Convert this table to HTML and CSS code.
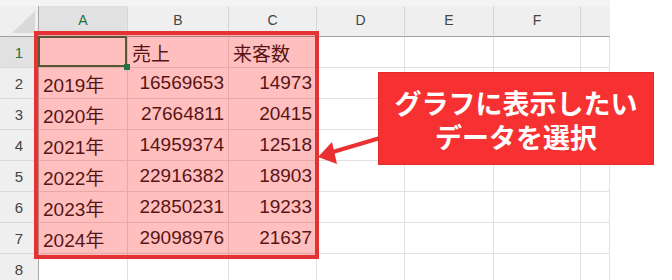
FILE: index.html
```html
<!DOCTYPE html>
<html lang="ja">
<head>
<meta charset="utf-8">
<link rel="stylesheet" href="styles.css">
</head>
<body>
<div class="sheet">
  <div class="topbar"></div>
  <div class="grid">
    <div class="corner"><span class="tri"></span></div>
    <div class="ch sel">A</div>
    <div class="ch">B</div>
    <div class="ch">C</div>
    <div class="ch">D</div>
    <div class="ch">E</div>
    <div class="ch">F</div>
    <div class="ch last"></div>

    <div class="rh sel">1</div>
    <div class="c active"><span class="handle"></span></div>
    <div class="c">売上</div>
    <div class="c">来客数</div>
    <div class="c"></div><div class="c"></div><div class="c"></div><div class="c"></div>

    <div class="rh">2</div>
    <div class="c">2019年</div>
    <div class="c n">16569653</div>
    <div class="c n">14973</div>
    <div class="c"></div><div class="c"></div><div class="c"></div><div class="c"></div>

    <div class="rh">3</div>
    <div class="c">2020年</div>
    <div class="c n">27664811</div>
    <div class="c n">20415</div>
    <div class="c"></div><div class="c"></div><div class="c"></div><div class="c"></div>

    <div class="rh">4</div>
    <div class="c">2021年</div>
    <div class="c n">14959374</div>
    <div class="c n">12518</div>
    <div class="c"></div><div class="c"></div><div class="c"></div><div class="c"></div>

    <div class="rh">5</div>
    <div class="c">2022年</div>
    <div class="c n">22916382</div>
    <div class="c n">18903</div>
    <div class="c"></div><div class="c"></div><div class="c"></div><div class="c"></div>

    <div class="rh">6</div>
    <div class="c">2023年</div>
    <div class="c n">22850231</div>
    <div class="c n">19233</div>
    <div class="c"></div><div class="c"></div><div class="c"></div><div class="c"></div>

    <div class="rh">7</div>
    <div class="c">2024年</div>
    <div class="c n">29098976</div>
    <div class="c n">21637</div>
    <div class="c"></div><div class="c"></div><div class="c"></div><div class="c"></div>

    <div class="rh">8</div>
    <div class="c"></div><div class="c"></div><div class="c"></div>
    <div class="c"></div><div class="c"></div><div class="c"></div><div class="c"></div>
  </div>

  <div class="selection"></div>

  <svg class="arrow" width="672" height="280" viewBox="0 0 672 280">
    <line x1="380" y1="138" x2="326" y2="154" stroke="#ea3131" stroke-width="4"/>
    <polygon points="318,157 332,142 337,164" fill="#ea3131"/>
  </svg>

  <div class="callout">
    <span>グラフに表示したい</span>
    <span>データを選択</span>
  </div>
</div>
</body>
</html>
```
FILE: styles.css
```css
html, body {
  margin: 0;
  padding: 0;
  background: #ffffff;
}

.sheet {
  position: relative;
  width: 672px;
  height: 280px;
  overflow: hidden;
  background: #ffffff;
}

.topbar {
  width: 610px;
  height: 6px;
  background: #f4f4f4;
}

.grid {
  display: grid;
  width: 610px;
  grid-template-columns: 39px 89px 101px 88px 88px 89px 87px 29px;
  grid-auto-rows: 31px;
  font-family: "Liberation Sans", "Noto Sans CJK JP", sans-serif;
}

.grid > div {
  box-sizing: border-box;
}

.corner {
  position: relative;
  background: #efefef;
  border-right: 1px solid #a8a8a8;
  border-bottom: 1px solid #a0a0a0;
}

.tri {
  position: absolute;
  right: 3px;
  bottom: 3px;
  width: 0;
  height: 0;
  border-left: 23px solid transparent;
  border-bottom: 22px solid #d9d9d9;
}

.ch {
  background: #efefef;
  border-right: 1px solid #d6d6d6;
  border-bottom: 1px solid #a0a0a0;
  display: flex;
  align-items: center;
  justify-content: center;
  font-size: 14px;
  color: #444444;
  padding-bottom: 2px;
}

.ch.sel {
  background: #e1e1e1;
  color: #1e7145;
}

.ch.last {
  border-right: none;
}

.rh {
  background: #efefef;
  border-right: 1px solid #a8a8a8;
  border-bottom: 1px solid #d9d9d9;
  display: flex;
  align-items: center;
  justify-content: center;
  font-size: 15px;
  color: #444444;
}

.rh.sel {
  background: #e1e1e1;
  color: #1e7145;
}

.c {
  position: relative;
  border-right: 1px solid #e1e1e1;
  border-bottom: 1px solid #e1e1e1;
  display: flex;
  align-items: center;
  padding: 0 4px;
  font-size: 19px;
  color: #1c1c1c;
  white-space: nowrap;
}

.c.n {
  justify-content: flex-end;
}

.c.active::after {
  content: "";
  position: absolute;
  left: -1px;
  top: -1px;
  right: 0;
  bottom: 0;
  border: 2px solid #217346;
}

.handle {
  position: absolute;
  right: -3px;
  bottom: -3px;
  width: 6px;
  height: 6px;
  background: #217346;
  z-index: 1;
}

.selection {
  position: absolute;
  left: 34px;
  top: 31px;
  width: 285px;
  height: 228px;
  box-sizing: border-box;
  border: 4px solid #e53232;
  background: rgba(255, 0, 0, 0.25);
}

.arrow {
  position: absolute;
  left: 0;
  top: 0;
}

.callout {
  position: absolute;
  left: 378px;
  top: 72px;
  width: 276px;
  height: 93px;
  box-sizing: border-box;
  padding-top: 3px;
  background: #f73131;
  border: 1px solid #e22a2a;
  display: flex;
  flex-direction: column;
  align-items: center;
  justify-content: center;
  color: #ffffff;
  font-family: "Noto Sans CJK JP", sans-serif;
  font-weight: 700;
  font-size: 27px;
  line-height: 34px;
}
```
